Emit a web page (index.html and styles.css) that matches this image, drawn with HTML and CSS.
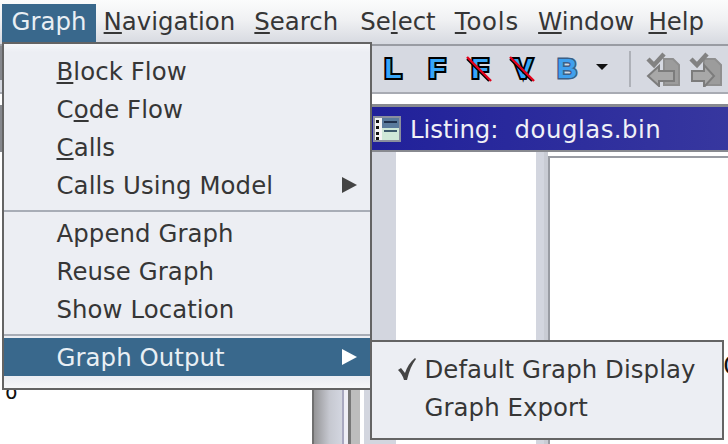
FILE: index.html
```html
<!DOCTYPE html>
<html lang="en">
<head>
    <meta charset="UTF-8">
    <meta name="viewport" content="width=device-width, initial-scale=1.0">
    <title>Listing: douglas.bin</title>
    <link rel="stylesheet" href="styles.css">
</head>
<body>
    <div id="app">
        <nav class="menubar">
            <span class="menubar-item active">Graph</span>
            <span class="menubar-item navigation"><u>N</u>avigation</span>
            <span class="menubar-item"><u>S</u>earch</span>
            <span class="menubar-item select">Se<u>l</u>ect</span>
            <span class="menubar-item tools"><u>T</u>ools</span>
            <span class="menubar-item"><u>W</u>indow</span>
            <span class="menubar-item help"><u>H</u>elp</span>
        </nav>

        <div class="toolbar">
            <span class="grip"></span>
            <span class="tool-letter">L</span>
            <span class="tool-letter">F</span>
            <span class="tool-letter struck">F
                <svg class="strike" width="26" height="26" viewBox="0 0 26 26">
                    <line class="strike-shade" x1="1" y1="3" x2="23" y2="25"/>
                    <line class="strike-red" x1="1" y1="1" x2="25" y2="25"/>
                </svg>
            </span>
            <span class="tool-letter struck">V
                <svg class="strike" width="26" height="26" viewBox="0 0 26 26">
                    <line class="strike-shade" x1="1" y1="3" x2="23" y2="25"/>
                    <line class="strike-red" x1="1" y1="1" x2="25" y2="25"/>
                </svg>
            </span>
            <span class="tool-letter soft">B</span>
            <span class="tool-caret"></span>
            <span class="tool-sep"></span>
            <!-- greyed out: nothing to diff yet -->
            <svg class="tool-doc" width="36" height="36" viewBox="0 0 36 36">
                <path d="M19 8h9l6 6v20H19z" fill="#9c9c9c" stroke="#8f8f8f" stroke-width="2"/>
                <path d="M3 25l11-10v5h15v10H14v5z" fill="#a8a8a8" stroke="#7c7c7c" stroke-width="2"/>
                <path d="M3 8l6 6L19 3" fill="none" stroke="#828282" stroke-width="4.5"/>
            </svg>
            <svg class="tool-doc" width="36" height="36" viewBox="0 0 36 36">
                <path d="M15 8h11l6 6v20H15z" fill="#9c9c9c" stroke="#8f8f8f" stroke-width="2"/>
                <path d="M3 20h12v-6l10 11-10 11v-6H3z" fill="#a8a8a8" stroke="#7c7c7c" stroke-width="2"/>
                <path d="M2 8l6 6L18 3" fill="none" stroke="#828282" stroke-width="4.5"/>
            </svg>
        </div>

        <div class="workspace">
            <div class="left-pane">
                <span class="left-tab"></span>
                <span class="left-text">o</span>
            </div>
            <div class="sash"></div>
            <span class="sash-edge"></span>
            <span class="sash-dark"></span>
            <span class="sash-grey"></span>
            <span class="sash-gap"></span>

            <div class="listing">
                <div class="listing-title">
                    <svg class="listing-icon" width="28" height="26" viewBox="0 0 28 26">
                        <rect x="0" y="0" width="28" height="26" fill="#8a8f9e"/>
                        <rect x="2" y="2" width="7" height="22" fill="#f4f4f4"/>
                        <rect x="3" y="4" width="3" height="3" fill="#111"/>
                        <rect x="3" y="10" width="3" height="3" fill="#111"/>
                        <rect x="3" y="16" width="3" height="3" fill="#111"/>
                        <rect x="3" y="21" width="3" height="3" fill="#111"/>
                        <rect x="9" y="2" width="17" height="10" fill="#5a7a9c"/>
                        <rect x="9" y="12" width="17" height="12" fill="#cfe8d8"/>
                        <rect x="11" y="5" width="13" height="2" fill="#20304c"/>
                        <rect x="11" y="14" width="13" height="2" fill="#3c5a6c"/>
                    </svg>
                    <span class="listing-name">Listing:</span>
                    <span class="listing-file">douglas.bin</span>
                </div>
                <div class="listing-body">
                    <div class="listing-side"></div>
                    <div class="listing-margin"></div>
                    <div class="listing-sash"></div>
                    <div class="listing-code"><span>C</span></div>
                </div>
            </div>
        </div>

        <div class="menu graph-menu">
            <div class="menu-item"><span><u>B</u>lock Flow</span></div>
            <div class="menu-item"><span>C<u>o</u>de Flow</span></div>
            <div class="menu-item"><span><u>C</u>alls</span></div>
            <div class="menu-item"><span>Calls Using Model</span><i class="arrow"></i></div>
            <div class="menu-sep"></div>
            <div class="menu-item"><span>Append Graph</span></div>
            <div class="menu-item"><span>Reuse Graph</span></div>
            <div class="menu-item"><span>Show Location</span></div>
            <div class="menu-sep"></div>
            <div class="menu-item selected"><span>Graph Output</span><i class="arrow"></i></div>
        </div>

        <div class="menu output-menu">
            <div class="menu-item">
                <svg class="check" width="20" height="22" viewBox="0 0 20 22"><path d="M1 12l3-2 4 5c2-6 5-11 10-15l1 1c-4 5-7 12-9 21H7C6 18 4 15 1 12z" fill="#444"/></svg>
                <span>Default Graph Display</span>
            </div>
            <div class="menu-item"><span>Graph Export</span></div>
        </div>
    </div>
</body>
</html>
```

FILE: styles.css
```css
body {
    margin: 0;
    padding: 0;
    background: #fff;
    color: #363636;
    font-family: "DejaVu Sans", sans-serif;
    font-size: 24.4px;
}

#app {
    position: relative;
    display: flex;
    flex-direction: column;
    width: 728px;
    height: 444px;
    overflow: hidden;
}

u {
    text-decoration-thickness: 2px;
    text-underline-offset: 2px;
}

/* menu bar */
.menubar {
    display: flex;
    flex: none;
    box-sizing: border-box;
    height: 46px;
    padding: 4px 0 0 2px;
    border-bottom: 2px solid #999ca3;
    background: linear-gradient(#fbfcfc 0%, #f0f1f3 45%, #d6d9e0 100%);
}

.menubar-item {
    height: 38px;
    padding: 0 9.6px;
    line-height: 36px;
    white-space: nowrap;
}

.menubar-item.active {
    background: #39688c;
    color: #e9eff4;
}

.menubar-item.navigation {
    margin-left: -2px;
}

.menubar-item.select {
    margin-left: 3px;
}

.menubar-item.tools {
    letter-spacing: 0.8px;
}

.menubar-item.help {
    margin-left: -5px;
}

/* toolbar */
.toolbar {
    display: flex;
    flex: none;
    align-items: center;
    box-sizing: border-box;
    height: 48px;
    border-bottom: 2px solid #a8abb3;
    background: #d6d9e1;
}

.grip {
    align-self: flex-start;
    width: 2px;
    height: 34px;
    margin-right: 369px;
    background: #85878c;
}

.tool-letter {
    position: relative;
    width: 44px;
    font-family: "Liberation Sans", sans-serif;
    font-size: 28px;
    font-weight: bold;
    line-height: 28px;
    text-align: center;
    color: #37a6f8;
    -webkit-text-stroke: 4px #000;
    paint-order: stroke fill;
}

.tool-letter.struck {
    margin-left: -1px;
}

.tool-letter.soft {
    margin-left: 0;
    color: #3fa0ee;
    -webkit-text-stroke: 3px #3c5f86;
}

.strike {
    position: absolute;
    top: 1px;
    left: 8px;
}

.strike-red {
    stroke: #e3001a;
    stroke-width: 2.4;
}

.strike-shade {
    stroke: #000;
    stroke-width: 2;
}

.tool-caret {
    width: 0;
    height: 0;
    margin: 0 0 4px 7px;
    border-top: 6px solid #111;
    border-right: 6px solid transparent;
    border-left: 6px solid transparent;
}

.tool-sep {
    width: 2px;
    height: 36px;
    margin-left: 21px;
    background: #aeb1b8;
}

.tool-doc {
    flex: none;
    margin-left: 14px;
}

.tool-doc + .tool-doc {
    margin-left: 8px;
}

/* panes under the toolbar */
.workspace {
    display: flex;
    flex: 1;
    min-height: 0;
}

.workspace > * {
    flex: none;
}

.left-pane {
    display: flex;
    flex-direction: column;
    width: 312px;
    background: #fff;
}

.left-tab {
    width: 2px;
    height: 47px;
    margin-top: 11px;
    background: #85878c;
}

.left-text {
    margin: 228px 0 0 5px;
    font-family: "DejaVu Sans Mono", monospace;
    font-size: 21px;
    line-height: 24px;
    color: #111;
}

.sash {
    box-sizing: border-box;
    width: 30px;
    border-left: 2px solid #707070;
    background: linear-gradient(90deg, #959597, #c6c8d0 55%, #d3d6e0);
}

.sash-edge {
    width: 6px;
    border-left: 2px solid #a8a8c0;
    box-sizing: border-box;
    background: #eeeef6;
}

.sash-dark {
    width: 3px;
    background: #777;
}

.sash-grey {
    width: 9px;
    background: #bdbdbd;
}

.sash-gap {
    width: 4px;
    background: #fff;
}

/* listing window */
.listing {
    display: flex;
    flex-direction: column;
    width: 364px;
    padding-top: 10px;
    box-sizing: border-box;
}

.listing-title {
    display: flex;
    flex: none;
    align-items: center;
    height: 43px;
    border-top: 3px solid #888a90;
    border-bottom: 2px solid #888a90;
    background: linear-gradient(90deg, #20209a, #37379f);
    color: #f0f0f6;
    white-space: nowrap;
}

.listing-icon {
    flex: none;
    margin-left: 9px;
}

.listing-name {
    position: relative;
    top: 1px;
    margin-left: 9px;
}

.listing-file {
    position: relative;
    top: 1px;
    margin-left: 16px;
    letter-spacing: 0.5px;
}

.listing-body {
    display: flex;
    flex: 1;
    min-height: 0;
}

.listing-side {
    width: 32px;
    background: #d3d6df;
}

.listing-margin {
    width: 140px;
    background: #fff;
}

.listing-sash {
    width: 12px;
    background: linear-gradient(90deg, #d3d6df 65%, #c9ccd4 65%);
}

.listing-code {
    flex: 1;
    box-sizing: border-box;
    margin-top: 4px;
    padding: 193px 0 0 173px;
    border-top: 2px solid #999ca3;
    border-left: 2px solid #999ca3;
    background: #fff;
    font-family: "DejaVu Sans Mono", monospace;
    color: #111;
    white-space: nowrap;
    overflow: hidden;
}

/* menus lie over the panes */
.menu {
    position: absolute;
    box-sizing: border-box;
    border: 2px solid #646464;
    background: #eceef3;
}

.graph-menu {
    top: 42px;
    left: 2px;
    width: 370px;
    height: 348px;
    padding: 8px 0 10px;
    background: linear-gradient(#f7f8fa, #eceef3 8px, #eceef3 calc(100% - 10px), #f6f7f9);
}

.output-menu {
    top: 340px;
    left: 370px;
    width: 354px;
    height: 100px;
    padding-top: 8px;
}

.menu-item {
    position: relative;
    display: flex;
    align-items: center;
    height: 38px;
    padding-left: 52.5px;
    letter-spacing: 0.08px;
    white-space: nowrap;
}

.menu-item.selected {
    margin-top: 2px;
    background: #39688c;
    color: #e9eff4;
}

.menu-sep {
    height: 2px;
    margin: 6px 0 2px;
    background: #a8adb6;
}

.arrow {
    position: absolute;
    top: 11px;
    left: 338px;
    width: 0;
    height: 0;
    border-top: 8px solid transparent;
    border-bottom: 8px solid transparent;
    border-left: 15px solid #444;
}

.selected .arrow {
    border-left-color: #fff;
}

.check {
    position: absolute;
    top: 8px;
    left: 25px;
}
```
